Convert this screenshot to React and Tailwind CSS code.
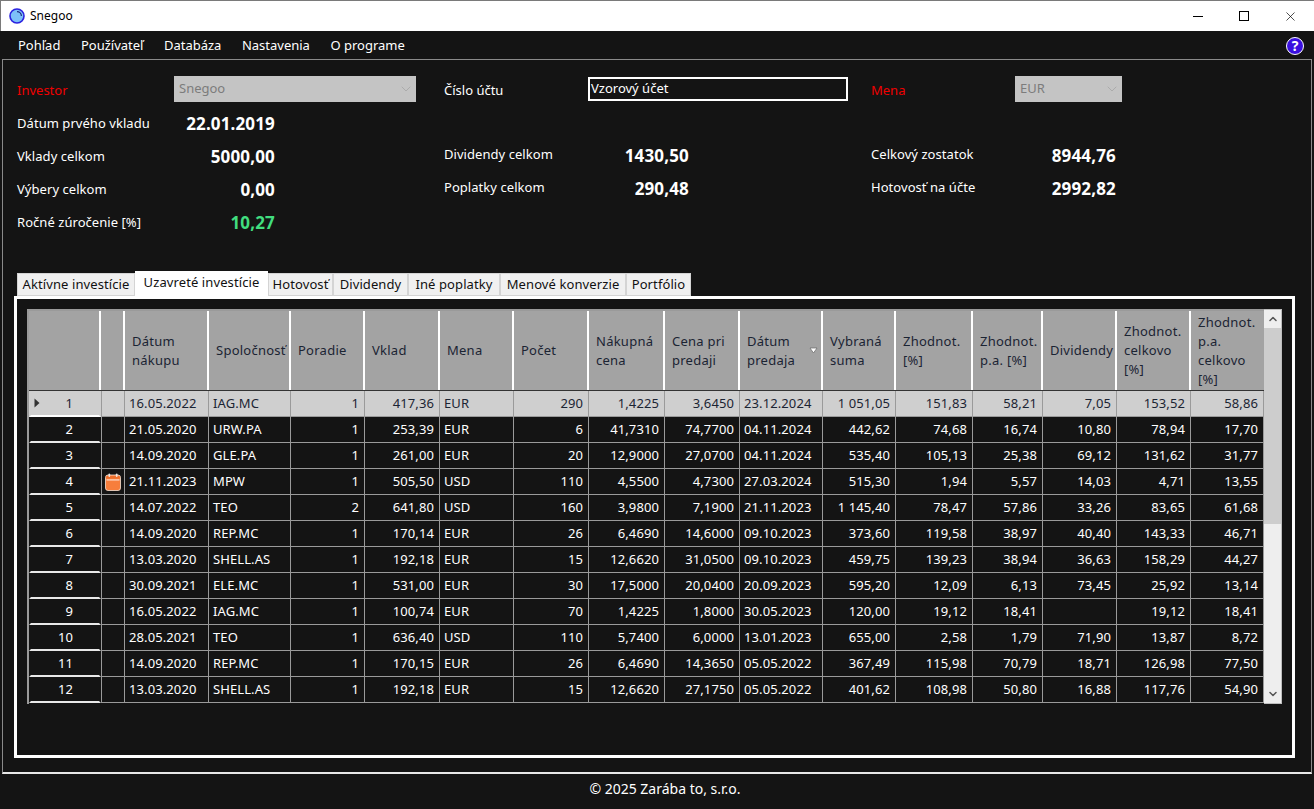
import { ChevronDown, ChevronUp, X } from 'lucide-react';

const cols = 'grid grid-cols-[72px_24px_84px_82px_74px_75px_74px_75px_76px_75px_83px_73px_77px_70px_74px_74px_73px]';

const headers = [
  ['', ''],
  ['', ''],
  ['Dátum', 'nákupu'],
  ['Spoločnosť'],
  ['Poradie'],
  ['Vklad'],
  ['Mena'],
  ['Počet'],
  ['Nákupná', 'cena'],
  ['Cena pri', 'predaji'],
  ['Dátum', 'predaja'],
  ['Vybraná', 'suma'],
  ['Zhodnot.', '[%]'],
  ['Zhodnot.', 'p.a. [%]'],
  ['Dividendy'],
  ['Zhodnot.', 'celkovo', '[%]'],
  ['Zhodnot.', 'p.a.', 'celkovo', '[%]'],
];

const rows = [
  ['16.05.2022', 'IAG.MC', '1', '417,36', 'EUR', '290', '1,4225', '3,6450', '23.12.2024', '1 051,05', '151,83', '58,21', '7,05', '153,52', '58,86'],
  ['21.05.2020', 'URW.PA', '1', '253,39', 'EUR', '6', '41,7310', '74,7700', '04.11.2024', '442,62', '74,68', '16,74', '10,80', '78,94', '17,70'],
  ['14.09.2020', 'GLE.PA', '1', '261,00', 'EUR', '20', '12,9000', '27,0700', '04.11.2024', '535,40', '105,13', '25,38', '69,12', '131,62', '31,77'],
  ['21.11.2023', 'MPW', '1', '505,50', 'USD', '110', '4,5500', '4,7300', '27.03.2024', '515,30', '1,94', '5,57', '14,03', '4,71', '13,55'],
  ['14.07.2022', 'TEO', '2', '641,80', 'USD', '160', '3,9800', '7,1900', '21.11.2023', '1 145,40', '78,47', '57,86', '33,26', '83,65', '61,68'],
  ['14.09.2020', 'REP.MC', '1', '170,14', 'EUR', '26', '6,4690', '14,6000', '09.10.2023', '373,60', '119,58', '38,97', '40,40', '143,33', '46,71'],
  ['13.03.2020', 'SHELL.AS', '1', '192,18', 'EUR', '15', '12,6620', '31,0500', '09.10.2023', '459,75', '139,23', '38,94', '36,63', '158,29', '44,27'],
  ['30.09.2021', 'ELE.MC', '1', '531,00', 'EUR', '30', '17,5000', '20,0400', '20.09.2023', '595,20', '12,09', '6,13', '73,45', '25,92', '13,14'],
  ['16.05.2022', 'IAG.MC', '1', '100,74', 'EUR', '70', '1,4225', '1,8000', '30.05.2023', '120,00', '19,12', '18,41', '', '19,12', '18,41'],
  ['28.05.2021', 'TEO', '1', '636,40', 'USD', '110', '5,7400', '6,0000', '13.01.2023', '655,00', '2,58', '1,79', '71,90', '13,87', '8,72'],
  ['14.09.2020', 'REP.MC', '1', '170,15', 'EUR', '26', '6,4690', '14,3650', '05.05.2022', '367,49', '115,98', '70,79', '18,71', '126,98', '77,50'],
  ['13.03.2020', 'SHELL.AS', '1', '192,18', 'EUR', '15', '12,6620', '27,1750', '05.05.2022', '401,62', '108,98', '50,80', '16,88', '117,76', '54,90'],
];

const tabs = [
  ['Aktívne investície', 'w-[118px]'],
  ['Uzavreté investície', 'w-[133px]'],
  ['Hotovosť', 'w-[65px]'],
  ['Dividendy', 'w-[75px]'],
  ['Iné poplatky', 'w-[92px]'],
  ['Menové konverzie', 'w-[126px]'],
  ['Portfólio', 'w-[65px]'],
];

const leftAligned = [0, 1, 4, 8];

function Logo() {
  return (
    <svg width="16" height="16" viewBox="0 0 16 16">
      <circle cx="8" cy="8" r="7" fill="#7cc0f8" stroke="#2a22e0" strokeWidth="1.6" />
      <path d="M8 3.6a4.4 4.4 0 0 1 4.4 4.4" fill="none" stroke="#1c2a80" strokeWidth="1.2" />
    </svg>
  );
}

function CalendarIcon() {
  return (
    <svg width="16" height="18" viewBox="0 0 16 18">
      <rect x="0.5" y="2" width="15" height="15.5" rx="2.5" fill="#f77e3c" stroke="#f7e3d6" strokeWidth="0.8" />
      <rect x="1.5" y="3" width="13" height="2.6" fill="#ee6f2c" />
      <rect x="1.5" y="6.5" width="13" height="0.9" fill="#fff" />
      <rect x="3.5" y="0.5" width="1.6" height="3.5" rx="0.8" fill="#e8e8e8" />
      <rect x="10.9" y="0.5" width="1.6" height="3.5" rx="0.8" fill="#e8e8e8" />
    </svg>
  );
}

function StatRow({ label, value, width, valueColor = 'text-white', labelClass = '' }) {
  return (
    <div className={`flex h-[33px] items-center justify-between ${width}`}>
      <span className={`text-[13px] tracking-[0.05px] text-white ${labelClass}`}>{label}</span>
      <span className={`text-[17px] font-bold tracking-[0.15px] ${valueColor}`}>{value}</span>
    </div>
  );
}

function FakeSelect({ value, width }) {
  return (
    <div className={`mb-[4px] flex h-[26px] items-center justify-between bg-[#c4c4c4] pl-[5px] pr-[2px] pt-[1px] text-[13px] text-[#7c7c7c] ${width}`}>
      {value}
      <ChevronDown className="h-[16px] w-[16px] text-[#a2a2a2]" strokeWidth={1.1} />
    </div>
  );
}

function HeaderCell({ lines, index }) {
  const last = index === headers.length - 1;
  return (
    <div className={`relative flex h-[79px] flex-col justify-center bg-[#a3a3a3] pl-[7px] text-[13px] leading-[19px] tracking-[0.25px] text-[#1b2433] ${last ? '' : 'border-r-[2px] border-white'}`}>
      {lines.map((line) => (
        <span key={line} className="whitespace-nowrap">{line}</span>
      ))}
      {index === 10 && (
        <svg className="absolute right-[3px] top-[36px]" width="9" height="7" viewBox="0 0 9 7">
          <path d="M1 1h7L4.5 6z" fill="#fff" stroke="#666" strokeWidth="0.7" />
        </svg>
      )}
    </div>
  );
}

function Row({ row, index }) {
  const selected = index === 0;
  const rowColor = selected ? 'bg-[#cfcfcf] text-[#1b2433]' : 'bg-[#141414] text-white';
  return (
    <div className={`${cols} h-[26px] text-[13px] tracking-[0.1px] ${rowColor}`}>
      <div className={`relative flex items-center justify-end border-x-[2px] border-b-[2px] pr-[26px] pt-[2px] ${selected ? 'border-x-[#cfcfcf] border-b-white' : 'border-x-[#141414] border-b-[#e8e8e8]'}`}>
        {selected && (
          <svg className="absolute left-[3px] top-[7px]" width="6" height="10" viewBox="0 0 6 10">
            <path d="M0.5 0.5L5.5 5L0.5 9.5z" fill="#333" />
          </svg>
        )}
        {index + 1}
      </div>
      <div className="flex items-center justify-center border-x border-b border-[#9a9a9a]">
        {index === 3 && <CalendarIcon />}
      </div>
      {row.map((cell, i) => (
        <div
          key={i}
          className={`flex items-center whitespace-nowrap border-b border-r border-[#9a9a9a] ${leftAligned.includes(i) ? 'justify-start pl-[4px]' : 'justify-end pr-[5px]'}`}
        >
          {cell}
        </div>
      ))}
    </div>
  );
}

export default function App() {
  return (
    <div className="flex h-[809px] w-[1314px] flex-col overflow-hidden bg-[#141414] font-['Noto_Sans','Open_Sans',sans-serif]">
      <div className="flex h-[31px] shrink-0 items-center justify-between border-l border-t border-[#7a7a7a] bg-white pl-[8px] text-black">
        <div className="flex items-center gap-[5px] text-[12px]">
          <Logo />
          Snegoo
        </div>
        <div className="flex items-center pr-[1px]">
          <span className="flex h-[30px] w-[46px] items-center justify-center"><span className="h-[1px] w-[10px] bg-black" /></span>
          <span className="flex h-[30px] w-[46px] items-center justify-center"><span className="h-[10px] w-[10px] border border-black" /></span>
          <span className="flex h-[30px] w-[46px] items-center justify-center"><X className="h-[15px] w-[15px] text-black" strokeWidth={1.1} /></span>
        </div>
      </div>

      <div className="flex h-[28px] shrink-0 items-center justify-between pl-[18px] pr-[10px] pt-[1px] text-[13px] text-white">
        <div className="flex gap-[20.5px]">
          <span>Pohľad</span>
          <span>Používateľ</span>
          <span>Databáza</span>
          <span>Nastavenia</span>
          <span>O programe</span>
        </div>
        <span className="flex h-[18px] w-[18px] items-center justify-center rounded-full border-[1.5px] border-white bg-[#3a10e0] text-[14px] font-bold leading-none text-white">?</span>
      </div>

      <div className="mx-[2px] flex h-[715px] shrink-0 flex-col border border-b-[2px] border-[#8a8a8a] border-b-[#e8e8e8] pl-[11px] pr-[16px]">
        <div className="flex h-[211px] shrink-0 pl-[3px] pt-[14px]">
          <div className="w-[427px] shrink-0">
            <div className="flex h-[33px] items-center">
              <span className="w-[157px] text-[13px] text-[#f00000]">Investor</span>
              <FakeSelect value="Snegoo" width="w-[242px]" />
            </div>
            <StatRow label="Dátum prvého vkladu" value="22.01.2019" width="w-[258px]" />
            <StatRow label="Vklady celkom" value="5000,00" width="w-[258px]" />
            <StatRow label="Výbery celkom" value="0,00" width="w-[258px]" />
            <StatRow label="Ročné zúročenie [%]" value="10,27" width="w-[258px]" valueColor="text-[#41dd7f]" />
          </div>
          <div className="w-[427px] shrink-0">
            <div className="flex h-[33px] items-center">
              <span className="w-[144px] text-[13px] text-white">Číslo účtu</span>
              <div className="mb-[4px] flex h-[24px] w-[260px] items-center border-2 border-white bg-[#141414] pl-[1px] text-[13px] text-white">Vzorový účet</div>
            </div>
            <div className="h-[32px]" />
            <StatRow label="Dividendy celkom" value="1430,50" width="w-[245px]" labelClass="mb-[2px]" />
            <StatRow label="Poplatky celkom" value="290,48" width="w-[245px]" labelClass="mb-[2px]" />
          </div>
          <div className="w-[400px] shrink-0">
            <div className="flex h-[33px] items-center">
              <span className="w-[144px] text-[13px] text-[#f00000]">Mena</span>
              <FakeSelect value="EUR" width="w-[107px]" />
            </div>
            <div className="h-[32px]" />
            <StatRow label="Celkový zostatok" value="8944,76" width="w-[245px]" labelClass="mb-[2px]" />
            <StatRow label="Hotovosť na účte" value="2992,82" width="w-[245px]" labelClass="mb-[2px]" />
          </div>
        </div>

        <div className="flex h-[25px] shrink-0 items-end pl-[3px]">
          {tabs.map(([name, width], i) => (
            <div
              key={name}
              className={`flex items-center justify-center whitespace-nowrap text-[13px] tracking-[0.1px] text-[#111111] ${width} ${i === 1 ? 'h-[25px] bg-white pb-[1px]' : 'h-[23px] border border-[#d4d4d4] bg-[#f0f0f0] pt-[1px]'}`}
            >
              {name}
            </div>
          ))}
        </div>

        <div className="h-[462px] w-[1281px] shrink-0 border-[3px] border-white px-[10px] pt-[10px]">
          <div className="flex">
            <div className="h-[395px] w-[1237px] shrink-0 overflow-hidden border-l-[2px] border-t-[2px] border-[#9a9a9a]">
              <div className={`${cols} border-b border-[#333333]`}>
                {headers.map((lines, i) => (
                  <HeaderCell key={i} lines={lines} index={i} />
                ))}
              </div>
              {rows.map((row, i) => (
                <Row key={i} row={row} index={i} />
              ))}
            </div>
            <div className="flex h-[395px] w-[18px] shrink-0 flex-col border border-l-0 border-[#bdbdbd] bg-[#eeeeee]">
              <div className="flex h-[18px] items-center justify-center"><ChevronUp className="h-[12px] w-[12px] text-[#555555]" strokeWidth={3} /></div>
              <div className="h-[196px] bg-[#cdcdcd]" />
              <div className="flex-1" />
              <div className="flex h-[18px] items-center justify-center"><ChevronDown className="h-[12px] w-[12px] text-[#555555]" strokeWidth={3} /></div>
            </div>
          </div>
        </div>
      </div>

      <div className="flex flex-1 items-center justify-center pb-[6px] pl-[16px] text-[14px] text-white">© 2025 Zarába to, s.r.o.</div>
    </div>
  );
}
